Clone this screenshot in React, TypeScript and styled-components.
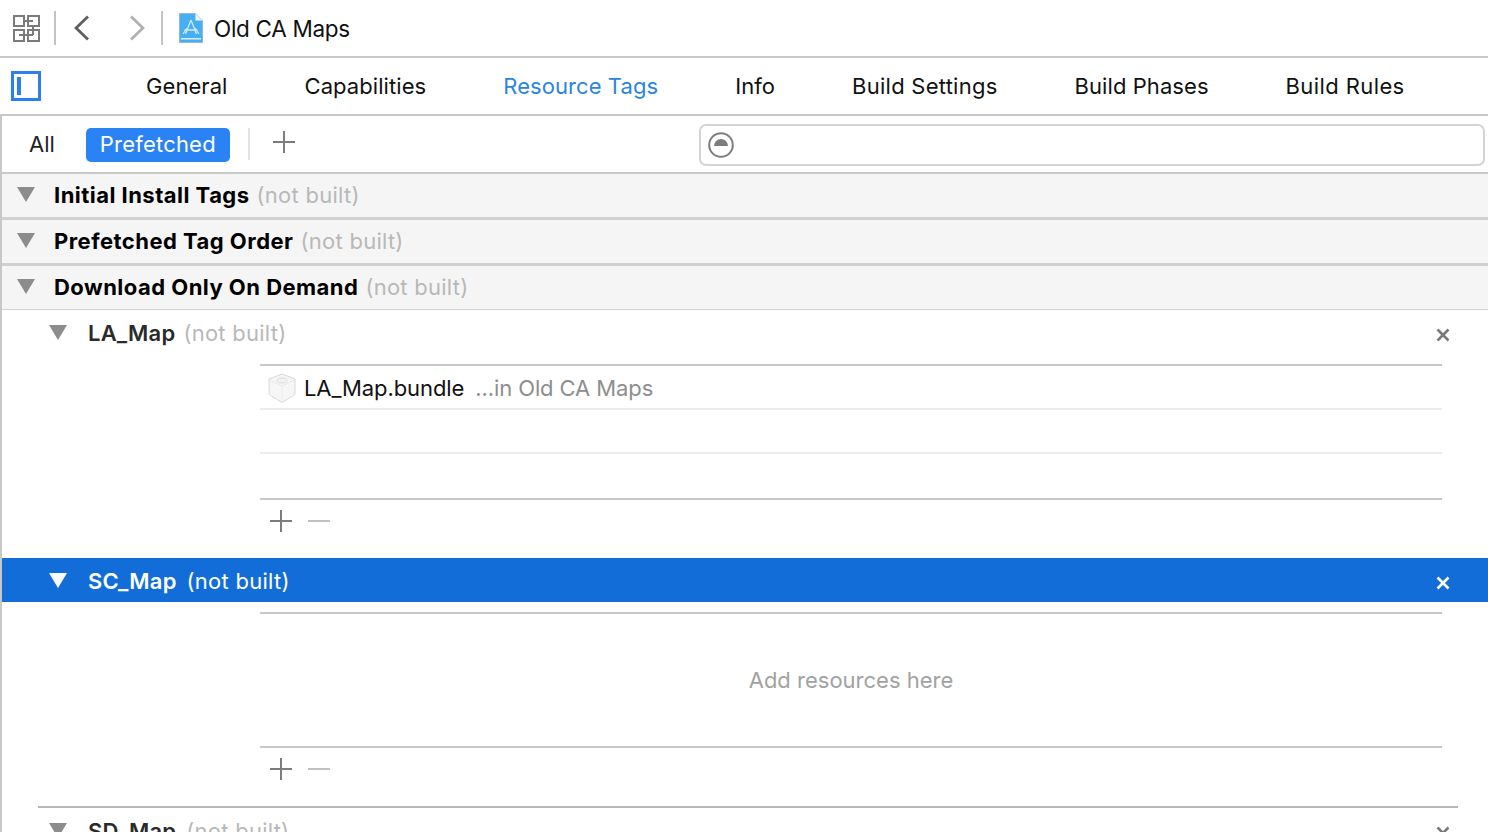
import React, {FC} from 'react';
import styled, {createGlobalStyle} from 'styled-components';

const GlobalStyle = createGlobalStyle`
  html, body {
    margin: 0;
    padding: 0;
    background: #fff;
    overflow: hidden;
  }
  body {
    font-family: Inter, "Liberation Sans", sans-serif;
    -webkit-font-smoothing: antialiased;
  }
`

const Page = styled.div`
  width: 1488px;
  height: 832px;
  overflow: hidden;
  background: #fff;
`
const TopBar = styled.div`
  height: 56px;
  display: flex;
  align-items: center;
  padding-left: 13px;
  border-bottom: 2px solid #c8c8c8;
  box-sizing: content-box;
`
const NavButton = styled.span<{ $left: number }>`
  display: flex;
  margin-left: ${p => p.$left}px;
`
const Divider = styled.span<{ $left: number }>`
  width: 2px;
  height: 34px;
  margin-left: ${p => p.$left}px;
  background: #c4c4c4;
`
const ProjectName = styled.span`
  margin-left: 11px;
  font-size: 22.5px;
  letter-spacing: -0.3px;
  color: #111;
`
const TabBar = styled.div`
  height: 56px;
  display: flex;
  align-items: center;
  padding-left: 11px;
  border-bottom: 2px solid #c8c8c8;
`
const SidebarToggle = styled.span`
  display: block;
  flex: none;
  width: 30px;
  height: 30px;
  box-sizing: border-box;
  border: 3px solid #2a80f0;
  padding: 3px;
  &::before {
    content: "";
    display: block;
    width: 4px;
    height: 18px;
    background: #2a80f0;
  }
`
const Tabs = styled.nav`
  display: flex;
  gap: 77px;
  margin-left: 105px;
`
const Tab = styled.span<{ $active?: boolean; $spacing: number }>`
  font-size: 22px;
  letter-spacing: ${p => p.$spacing}px;
  color: ${p => (p.$active ? '#2a85e0' : '#111')};
`
const Body = styled.div`
  border-left: 2px solid #c8c8c8;
`
const FilterBar = styled.div`
  height: 56px;
  display: flex;
  align-items: center;
  border-bottom: 2px solid #c8c8c8;
`
const AllLabel = styled.span`
  margin-left: 27px;
  font-size: 22px;
  color: #222;
`
const PrefetchedPill = styled.span`
  margin-left: 31px;
  margin-top: 2px;
  width: 144px;
  height: 34px;
  box-sizing: border-box;
  padding-bottom: 2px;
  display: flex;
  align-items: center;
  justify-content: center;
  border-radius: 5px;
  background: #2a83f4;
  color: #fff;
  font-size: 22px;
  letter-spacing: 0.2px;
`
const FilterDivider = styled.span`
  width: 2px;
  height: 32px;
  margin-left: 18px;
  background: #e2e2e2;
`
const PlusSlot = styled.span`
  display: flex;
  margin-left: 23px;
  margin-top: -4px;
`
const SearchBox = styled.div`
  width: 786px;
  height: 42px;
  margin-left: auto;
  margin-right: 3px;
  margin-top: 2px;
  box-sizing: border-box;
  border: 2px solid #d4d4d4;
  border-radius: 7px;
  display: flex;
  align-items: center;
  padding-left: 7px;
`
const SectionRow = styled.div<{ $last?: boolean }>`
  height: 42px;
  display: flex;
  align-items: center;
  padding: 0 0 1px 15px;
  background: #f5f5f5;
  border-bottom: ${p => (p.$last ? '1px solid #d4d4d4' : '3px solid #d0d0d0')};
  box-sizing: content-box;
  font-size: 22px;
`
const TriangleIcon = styled.svg`
  flex: none;
  width: 18px;
  height: 16px;
  margin-top: -1px;
`
const SectionTitle = styled.span`
  margin-left: 19px;
  font-weight: 700;
  color: #000;
  letter-spacing: 0.47px;
`
const NotBuilt = styled.span<{ $gap: number; $selected?: boolean }>`
  margin-left: ${p => p.$gap}px;
  color: ${p => (p.$selected ? '#fff' : '#b8b8b8')};
  font-weight: 400;
  letter-spacing: 0.26px;
`
const TagRow = styled.div<{ $selected?: boolean; $top?: number }>`
  height: ${p => (p.$selected ? 44 : 46)}px;
  box-sizing: border-box;
  margin-top: ${p => p.$top ?? 0}px;
  display: flex;
  align-items: center;
  padding: ${p => (p.$selected ? 2 : 0)}px 38px 0 47px;
  font-size: 22px;
  background: ${p => (p.$selected ? '#136dd8' : 'transparent')};
  color: ${p => (p.$selected ? '#fff' : '#2a2a2a')};
`
const TagName = styled.span`
  margin-left: 21px;
  font-weight: 600;
  letter-spacing: 0.2px;
`
const CloseSlot = styled.span`
  display: flex;
  margin-left: auto;
  margin-top: 3px;
`
const ResourceArea = styled.div<{ $top: number }>`
  margin-left: 258px;
  margin-right: 46px;
  margin-top: ${p => p.$top}px;
`
const ResourceList = styled.div`
  border-top: 2px solid #c8c8c8;
  border-bottom: 2px solid #c8c8c8;
`
const ResourceRow = styled.div<{ $height: number; $divider?: boolean }>`
  height: ${p => p.$height}px;
  box-sizing: border-box;
  display: flex;
  align-items: center;
  padding: 2px 0 0 7px;
  font-size: 22px;
  border-bottom: 0;
  box-shadow: ${p => (p.$divider ? '0 2px 0 #ececec' : 'none')};
  margin-bottom: ${p => (p.$divider ? 2 : 0)}px;
`
const FileName = styled.span`
  margin-left: 7px;
  color: #111;
  letter-spacing: -0.1px;
`
const FilePath = styled.span`
  margin-left: 11px;
  color: #8e8e8e;
  letter-spacing: -0.1px;
`
const EmptyHint = styled.div`
  height: 132px;
  display: flex;
  align-items: center;
  justify-content: center;
  font-size: 22px;
  color: #a2a2a2;
`
const AddRemove = styled.div`
  height: 44px;
  box-sizing: border-box;
  padding: 0 0 2px 10px;
  display: flex;
  align-items: center;
  gap: 16px;
`
const RowSeparator = styled.div`
  height: 2px;
  margin: 14px 30px 0 36px;
  background: #b8b8b8;
`

const Triangle: FC<{ color?: string }> = ({color = '#8c8c8c'}) => (
    <TriangleIcon viewBox="0 0 18 16">
        <polygon points="0,0 18,0 9,15" fill={color}/>
    </TriangleIcon>
)

const Plus: FC<{ color?: string }> = ({color = '#7d7d7d'}) => (
    <svg width="22" height="22" viewBox="0 0 22 22">
        <rect x="0" y="10" width="22" height="2" fill={color}/>
        <rect x="10" y="0" width="2" height="22" fill={color}/>
    </svg>
)

const Minus: FC = () => (
    <svg width="22" height="22" viewBox="0 0 22 22">
        <rect x="0" y="10" width="22" height="2" fill="#c0c0c0"/>
    </svg>
)

const Close: FC<{ color?: string }> = ({color = '#7a7a7a'}) => (
    <svg width="14" height="14" viewBox="0 0 14 14">
        <path d="M1.5 1.5 L12.5 12.5 M12.5 1.5 L1.5 12.5" stroke={color} strokeWidth="2.6"/>
    </svg>
)

const GridIcon: FC = () => (
    <svg width="27" height="27" viewBox="0 0 27 27" fill="none" stroke="#7b7b7b" strokeWidth="2">
        <rect x="1" y="1" width="10" height="10"/>
        <rect x="15" y="1" width="11" height="10"/>
        <rect x="1" y="15" width="10" height="11"/>
        <rect x="15" y="15" width="11" height="11"/>
        <path d="M11 6 H20 M6 20 H20 M20 11 V20"/>
    </svg>
)

const Chevron: FC<{ dir: 'left' | 'right'; color: string }> = ({dir, color}) => (
    <svg width="15" height="26" viewBox="0 0 15 26" fill="none" stroke={color} strokeWidth="2.8">
        <path d={dir === 'left' ? 'M14 1.5 L2 13 L14 24.5' : 'M1 1.5 L13 13 L1 24.5'}/>
    </svg>
)

const ProjectIcon: FC = () => (
    <svg width="24" height="30" viewBox="0 0 24 30">
        <path d="M.5 .5 H16.5 L23.5 7.5 V29.5 H.5 Z" fill="#46aef2" stroke="#8fb8d4"/>
        <path d="M16.5 .5 V7.5 H23.5 Z" fill="#edf5fb" stroke="#b6cfe0" strokeWidth=".6"/>
        <rect x="2" y="25" width="20" height="1.5" fill="#d8eefc"/>
        <path d="M12 7 L6.5 21 M12 7 L17.5 21 M5.5 17 H18.5 M4 21 L8 15 M20 21 L16 15" stroke="#cfe9fb" strokeWidth="1.3" fill="none"/>
    </svg>
)

const SearchFilterIcon: FC = () => (
    <svg width="26" height="26" viewBox="0 0 26 26">
        <circle cx="13" cy="13" r="11.8" fill="none" stroke="#7d7d7d" strokeWidth="2"/>
        <path d="M6 14 A7 7 0 0 1 20 14 Z" fill="#7d7d7d"/>
    </svg>
)

const BundleIcon: FC = () => (
    <svg width="30" height="30" viewBox="0 0 30 30">
        <path d="M15 1 L28 6 V20 C28 22 26 23 24 24 L15 29.5 L6 24 C4 23 2 22 2 20 V6 Z" fill="#f6f6f6" stroke="#d8d8d8" strokeLinejoin="round"/>
        <path d="M2.5 7 L15 13 L27.5 7" fill="none" stroke="#e8e8e8"/>
        <path d="M15 13 V29" fill="none" stroke="#eeeeee"/>
        <ellipse cx="15" cy="7.5" rx="5" ry="2.4" fill="#f2f2f2" stroke="#dcdcdc"/>
    </svg>
)

const tabs = [
    {title: 'General', spacing: 0.07},
    {title: 'Capabilities', spacing: 0.07},
    {title: 'Resource Tags', spacing: 0.07},
    {title: 'Info', spacing: 0.07},
    {title: 'Build Settings', spacing: 0.25},
    {title: 'Build Phases', spacing: 0.07},
    {title: 'Build Rules', spacing: 0.4},
]
const sections = ['Initial Install Tags', 'Prefetched Tag Order', 'Download Only On Demand']

const Controls: FC = () => (
    <AddRemove>
        <Plus/>
        <Minus/>
    </AddRemove>
)

const App: FC = () => {
    return (
        <Page>
            <GlobalStyle/>
            <TopBar>
                <GridIcon/>
                <Divider $left={14}/>
                <NavButton $left={18}><Chevron dir="left" color="#5f5f5f"/></NavButton>
                <NavButton $left={41}><Chevron dir="right" color="#b0b0b0"/></NavButton>
                <Divider $left={16}/>
                <NavButton $left={16}><ProjectIcon/></NavButton>
                <ProjectName>Old CA Maps</ProjectName>
            </TopBar>
            <TabBar>
                <SidebarToggle/>
                <Tabs>
                    {tabs.map(tab => (
                        <Tab key={tab.title} $spacing={tab.spacing} $active={tab.title === 'Resource Tags'}>
                            {tab.title}
                        </Tab>
                    ))}
                </Tabs>
            </TabBar>
            <Body>
                <FilterBar>
                    <AllLabel>All</AllLabel>
                    <PrefetchedPill>Prefetched</PrefetchedPill>
                    <FilterDivider/>
                    <PlusSlot><Plus/></PlusSlot>
                    <SearchBox><SearchFilterIcon/></SearchBox>
                </FilterBar>
                {sections.map((section, i) => (
                    <SectionRow key={section} $last={i === sections.length - 1}>
                        <Triangle/>
                        <SectionTitle>{section}</SectionTitle>
                        <NotBuilt $gap={7}>(not built)</NotBuilt>
                    </SectionRow>
                ))}
                <TagRow>
                    <Triangle/>
                    <TagName>LA_Map</TagName>
                    <NotBuilt $gap={8}>(not built)</NotBuilt>
                    <CloseSlot><Close/></CloseSlot>
                </TagRow>
                <ResourceArea $top={8}>
                    <ResourceList>
                        <ResourceRow $height={42} $divider>
                            <BundleIcon/>
                            <FileName>LA_Map.bundle</FileName>
                            <FilePath>...in Old CA Maps</FilePath>
                        </ResourceRow>
                        <ResourceRow $height={42} $divider/>
                        <ResourceRow $height={44}/>
                    </ResourceList>
                    <Controls/>
                </ResourceArea>
                <TagRow $selected $top={14}>
                    <Triangle color="#fff"/>
                    <TagName>SC_Map</TagName>
                    <NotBuilt $gap={10} $selected>(not built)</NotBuilt>
                    <CloseSlot><Close color="#fff"/></CloseSlot>
                </TagRow>
                <ResourceArea $top={10}>
                    <ResourceList>
                        <EmptyHint>Add resources here</EmptyHint>
                    </ResourceList>
                    <Controls/>
                </ResourceArea>
                <RowSeparator/>
                <TagRow>
                    <Triangle/>
                    <TagName>SD_Map</TagName>
                    <NotBuilt $gap={10}>(not built)</NotBuilt>
                    <CloseSlot><Close/></CloseSlot>
                </TagRow>
            </Body>
        </Page>
    );
};

export default App;
